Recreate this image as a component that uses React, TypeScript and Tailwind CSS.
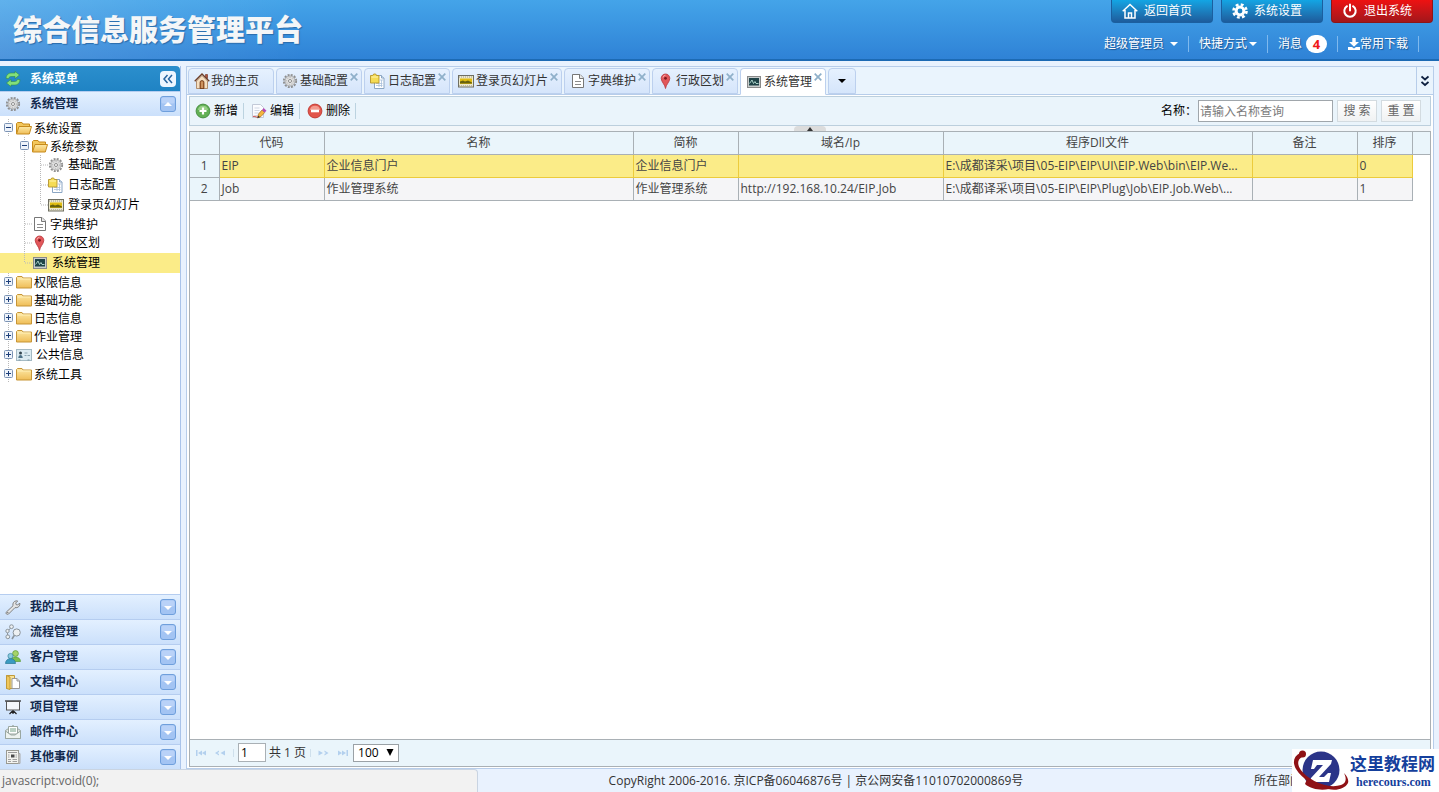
import type { ReactNode } from "react";

type IconName =
  | "home"
  | "gear"
  | "log"
  | "slide"
  | "doc"
  | "pin"
  | "monitor"
  | "folder"
  | "folderOpen"
  | "card"
  | "wrench"
  | "flow"
  | "users"
  | "archive"
  | "board"
  | "mail"
  | "news"
  | "refresh"
  | "add"
  | "edit"
  | "remove";

const ICONS: Record<IconName, ReactNode> = {
  home: (
    <>
      <path d="M11.500 1.500h2v4l-2-2z" fill="#b5533c" stroke="#6b2c1c" strokeWidth=".6" />
      <path d="M2.500 8 8 2.500 13.500 8v7.500h-11z" fill="#f6dfc0" stroke="#9a6a42" strokeWidth=".7" />
      <path d="M.7 8.300 8 1l7.300 7.300" fill="none" stroke="#6e3f28" strokeWidth="1.300" />
      <path d="M6 15.500v-6a2 2 0 0 1 4 0v6z" fill="#b0642f" stroke="#633216" strokeWidth=".7" />
      <path d="M8 8.500v6.500" stroke="#f6d9a8" strokeWidth=".8" />
    </>
  ),
  gear: (
    <>
      <circle cx="8" cy="8" r="6.200" fill="none" stroke="#8e8e8e" strokeWidth="1.800" strokeDasharray="2 1.246" />
      <circle cx="8" cy="8" r="5" fill="#e3e3e3" stroke="#9a9a9a" strokeWidth=".8" />
      <circle cx="8" cy="8" r="3.400" fill="none" stroke="#b5b5b5" strokeWidth="1" strokeDasharray="1.500 1" />
      <circle cx="8" cy="8" r="1.500" fill="#fff" stroke="#808080" strokeWidth=".9" />
    </>
  ),
  log: (
    <>
      <path d="M4.500 2.500h7l2.500 2.500v10.500H4.500z" fill="#fff" stroke="#8ba6c4" />
      <path d="M11.500 2.500V5H14" fill="#dbe8f6" stroke="#8ba6c4" />
      <path d="M6 10.500h6.500M6 12.500h6.500M10 7h3M9 10v4M11.500 7v7" stroke="#a9c0dc" strokeWidth=".8" />
      <path d="M.5 2.500h2.300l.9-1.500h2l.8 1.500H9v7.500H.5z" fill="#f5dc55" stroke="#b6952c" strokeWidth=".9" />
      <path d="M1.500 4h6.500" stroke="#fff3ac" />
    </>
  ),
  slide: (
    <>
      <rect x=".5" y="2.500" width="15" height="11.500" fill="#eee9c9" stroke="#6f6f62" />
      <path d="M1 4h14" stroke="#999" strokeDasharray="1 1" />
      <path d="M1 12.700h14" stroke="#aaa" strokeDasharray="1 1" />
      <rect x="2" y="5.500" width="12" height="5.500" fill="#e1bd12" />
      <path d="M2 10.500V8.500l3-1 2 1 3-1 4 2v1z" fill="#66610f" />
    </>
  ),
  doc: (
    <>
      <path d="M2.500 1.500h7.500l3.500 3.500v9.500h-11z" fill="#fff" stroke="#777" strokeLinejoin="round" />
      <path d="M9.500 1.500v4h4" fill="#e9e9e9" stroke="#777" />
      <path d="M5 8.500h6M5 11.500h6" stroke="#8b8b8b" />
    </>
  ),
  pin: (
    <>
      <path d="M7.500 15.500c-.4-4-4.300-6.500-4.300-10.200a4.300 4.300 0 0 1 8.600 0c0 3.700-3.900 6.200-4.300 10.200z" fill="#e2575a" stroke="#b8353a" strokeWidth=".8" />
      <path d="M5 4.500a2.800 2.800 0 0 1 2.500-2.300" stroke="#f7a8a8" fill="none" />
      <circle cx="7.500" cy="5.300" r="1.400" fill="#7d1a1e" />
    </>
  ),
  monitor: (
    <>
      <rect x="1.500" y="2.500" width="13" height="11" fill="#c9cdcd" stroke="#8a8a8a" />
      <rect x="3" y="4" width="10" height="7.500" fill="#1f4347" />
      <path d="M3.500 9.500 6 6l1.500 3.500L9 7.500l1 2h2.500" fill="none" stroke="#b7dcd1" strokeWidth=".9" />
    </>
  ),
  folder: (
    <>
      <path d="M.5 14V3.500l1-1H6l1 1.500h8.500v10z" fill="url(#folderFill)" stroke="#c79536" />
      <path d="M1.500 5h13" stroke="#fff0b8" />
    </>
  ),
  folderOpen: (
    <>
      <path d="M.5 13.500v-10l1-1h4.500l1 1.500h6.500v3" fill="#f3c75c" stroke="#c68a1c" />
      <path d="M.5 14 3 6.500h12.500L13.300 14z" fill="url(#folderFill)" stroke="#c68a1c" />
    </>
  ),
  card: (
    <>
      <rect x=".5" y="2.500" width="15" height="11" fill="#dcebf2" stroke="#a5bac4" />
      <circle cx="4.500" cy="6" r="1.500" fill="#33444e" />
      <path d="M2.300 11c0-4 4.400-4 4.400 0z" fill="#4d7187" />
      <path d="M8.500 6h3M8.500 8.500h2M11.500 8.500h2.500" stroke="#8aa3b0" />
      <path d="M2.500 13h2M11.500 13h2" stroke="#7f97a4" />
    </>
  ),
  wrench: (
    <>
      <path
        d="M1.200 13.200 8 6.800c-.6-2.600.8-4.800 3.500-5l1.200.2-2 2 .4 1.600 1.600.4 2-2c.8 2.800-1.700 5.300-4.700 4.600l-6.500 6.500c-1.600.900-3.200-.7-2.300-1.900z"
        fill="#e4e4e4"
        stroke="#777"
        strokeWidth=".9"
      />
      <circle cx="2.800" cy="13.600" r=".7" fill="#666" />
    </>
  ),
  flow: (
    <g fill="#edf0f2" stroke="#8b949b">
      <path d="M3 7 6 3.500M2.500 9v3" />
      <circle cx="6.500" cy="2.700" r="1.900" />
      <circle cx="2.500" cy="7" r="1.700" />
      <circle cx="2.800" cy="12.800" r="1.900" />
      <circle cx="11.700" cy="8.500" r="3.600" />
      <path d="m9.200 11.500-2.200 3.500" strokeWidth="1.600" />
    </g>
  ),
  users: (
    <>
      <circle cx="10.500" cy="4.500" r="2.900" fill="#a6d36a" stroke="#609a33" strokeWidth=".7" />
      <path d="M5.500 12.500c0-6 10-6 10 0z" fill="#7cc04f" stroke="#5c9c38" strokeWidth=".7" />
      <circle cx="5.500" cy="7" r="2.600" fill="#8bcbe0" stroke="#38849e" strokeWidth=".7" />
      <path d="M.5 14.500c0-6.500 10-6.500 10 0z" fill="#3a9bc2" stroke="#267593" strokeWidth=".7" />
    </>
  ),
  archive: (
    <>
      <path d="M1.500 1.500h8v13h-8z" fill="#f9e296" stroke="#c09a3a" />
      <path d="M1.500 1.500 5 3v12.500l-3.500-1z" fill="#f0c75c" stroke="#c09a3a" />
      <path d="M7 4.500h5l2.500 2.500v7.500H7z" fill="#fff" stroke="#999" />
      <path d="M12 4.500V7h2.500" fill="#ddd" stroke="#999" />
    </>
  ),
  board: (
    <>
      <path d="M0 2h16" stroke="#333" strokeWidth="1.300" />
      <rect x="1.500" y="2.500" width="13" height="8.500" fill="#f4f7fb" stroke="#555" />
      <path d="M8 11v4M8 11.500 4.500 15M8 11.500l3.500 3.500" stroke="#222" strokeWidth="1.200" />
    </>
  ),
  mail: (
    <>
      <path d="m.5 6.500 7.500-5 7.500 5v8H.5z" fill="#dfe5e2" stroke="#9aa7a1" />
      <path d="M3.500 2.500h9V10h-9z" fill="#fff" stroke="#9aa7a1" />
      <path d="M5 5h6M5 7h6" stroke="#75a187" />
      <path d="m.5 7 5.500 4h4l5.500-4v7.500H.5z" fill="#edf2ef" stroke="#9aa7a1" />
    </>
  ),
  news: (
    <>
      <rect x="1.500" y="1.500" width="12" height="13" fill="#f3f3ef" stroke="#9a9a92" />
      <path d="M3 3.500h9" stroke="#999" />
      <rect x="6" y="5.500" width="3.500" height="3" fill="#4a4a4a" />
      <path d="M3 6h1.500M3 8h1.500M3 10.500h3M3 12.500h3M7.500 10.500h4.500M7.500 12.500h4.500M10.500 6H12M10.500 8H12" stroke="#a0a0a0" />
      <path d="M13.500 4.500h1.500v10h-1.500" fill="#ccc" stroke="#aaa" />
    </>
  ),
  refresh: (
    <g fill="#83e07a" stroke="#2f8a4a" strokeWidth=".6" strokeLinejoin="round">
      <path d="M1 7.300c0-3.300 2.500-5.300 5-5.300h4V.3l4.500 3.700-4.500 3.700V5.500H7C5 5.500 4 6 3.500 7.700z" />
      <path d="M15 8.700c0 3.300-2.500 5.300-5 5.300H6v1.700L1.500 12 6 8.300v2.200h3c2 0 3-.5 3.500-2.200z" />
    </g>
  ),
  add: (
    <>
      <circle cx="8" cy="8" r="6.900" fill="#62b055" stroke="#4a9145" />
      <path d="M2.800 7a5.300 5.300 0 0 1 10.400 0z" fill="#97d088" />
      <path d="M8 4.500v7M4.500 8h7" stroke="#fff" strokeWidth="2.200" />
    </>
  ),
  edit: (
    <>
      <path d="M1.500 1.500h8l3 3v10h-11z" fill="#fbfcff" stroke="#c3cad8" />
      <path d="M3.500 5h5M3.500 7.500h5M3.500 10h4M3.500 12.500h3" stroke="#cfd6e3" />
      <path d="m6.500 15 1-4 3.500-4 2.700 2.500-3.700 4z" fill="#f5b53c" stroke="#a06a24" strokeWidth=".7" />
      <path d="m11 7 2.700 2.500 1.800-1.800L12.700 5z" fill="#b64bb6" />
      <path d="M2 13.500c1.500-1 2.500 1 4.500.500" stroke="#c94a4a" fill="none" />
      <path d="m6.500 15 .7-2.500 1.800 1.800z" fill="#333" />
    </>
  ),
  remove: (
    <>
      <circle cx="8" cy="8" r="6.900" fill="#e2554b" stroke="#c43f38" />
      <path d="M2.800 7a5.300 5.300 0 0 1 10.400 0z" fill="#f29a8f" />
      <path d="M4 8h8" stroke="#fff" strokeWidth="2.600" />
    </>
  ),
};

function Icon({ name }: { name: IconName }) {
  return (
    <svg viewBox="0 0 16 16" className="size-4 shrink-0" aria-hidden="true">
      {ICONS[name]}
    </svg>
  );
}

const TABS: Array<{ label: string; icon: IconName; active?: boolean }> = [
  { label: "基础配置", icon: "gear" },
  { label: "日志配置", icon: "log" },
  { label: "登录页幻灯片", icon: "slide" },
  { label: "字典维护", icon: "doc" },
  { label: "行政区划", icon: "pin" },
  { label: "系统管理", icon: "monitor", active: true },
];

type Slot = "blank" | "line" | "join" | "end" | "minus" | "plus";

type TreeRow = { label: string; icon: IconName; slots: Slot[]; tall?: boolean; selected?: boolean };

const TREE: TreeRow[] = [
  { label: "系统设置", icon: "folderOpen", slots: ["minus"] },
  { label: "系统参数", icon: "folderOpen", slots: ["blank", "minus"] },
  { label: "基础配置", icon: "gear", slots: ["blank", "line", "join"], tall: true },
  { label: "日志配置", icon: "log", slots: ["blank", "line", "join"], tall: true },
  { label: "登录页幻灯片", icon: "slide", slots: ["blank", "line", "end"], tall: true },
  { label: "字典维护", icon: "doc", slots: ["blank", "join"] },
  { label: "行政区划", icon: "pin", slots: ["blank", "join"], tall: true },
  { label: "系统管理", icon: "monitor", slots: ["blank", "end"], tall: true, selected: true },
  { label: "权限信息", icon: "folder", slots: ["plus"] },
  { label: "基础功能", icon: "folder", slots: ["plus"] },
  { label: "日志信息", icon: "folder", slots: ["plus"] },
  { label: "作业管理", icon: "folder", slots: ["plus"] },
  { label: "公共信息", icon: "card", slots: ["plus"], tall: true },
  { label: "系统工具", icon: "folder", slots: ["plus"] },
];

const PANELS: Array<{ label: string; icon: IconName }> = [
  { label: "我的工具", icon: "wrench" },
  { label: "流程管理", icon: "flow" },
  { label: "客户管理", icon: "users" },
  { label: "文档中心", icon: "archive" },
  { label: "项目管理", icon: "board" },
  { label: "邮件中心", icon: "mail" },
  { label: "其他事例", icon: "news" },
];

const COLUMNS = [
  { title: "代码", width: "w-[105px]" },
  { title: "名称", width: "w-[309px]" },
  { title: "简称", width: "w-[105px]" },
  { title: "域名/Ip", width: "w-[205px]" },
  { title: "程序Dll文件", width: "w-[309px]" },
  { title: "备注", width: "w-[105px]" },
  { title: "排序", width: "w-[55px]" },
];

const ROWS = [
  ["EIP", "企业信息门户", "企业信息门户", "", "E:\\成都译采\\项目\\05-EIP\\EIP\\UI\\EIP.Web\\bin\\EIP.We...", "", "0"],
  [
    "Job",
    "作业管理系统",
    "作业管理系统",
    "http://192.168.10.24/EIP.Job",
    "E:\\成都译采\\项目\\05-EIP\\EIP\\Plug\\Job\\EIP.Job.Web\\...",
    "",
    "1",
  ],
];

function TreeSlot({ kind }: { kind: Slot }) {
  const box = kind === "minus" || kind === "plus";
  return (
    <svg className="h-full w-4 shrink-0" aria-hidden="true">
      {kind !== "blank" && (
        <line x1="8.5" y1="0" x2="8.5" y2={kind === "end" ? "50%" : "100%"} stroke="#b9b9b9" strokeDasharray="1 1" />
      )}
      {(kind === "join" || kind === "end") && (
        <line x1="9" y1="50%" x2="16" y2="50%" stroke="#b9b9b9" strokeDasharray="1 1" />
      )}
      {box && (
        <svg y="50%" overflow="visible">
          <rect x="4.5" y="-4.500" width="8" height="8" rx="1" fill="#eef3fa" stroke="#7b93b4" />
          <path d={kind === "minus" ? "M6 -.5h5" : "M6 -.5h5M8.500 -3v5"} stroke="#1d3f7a" />
        </svg>
      )}
    </svg>
  );
}

function ToggleBox({ up }: { up?: boolean }) {
  return (
    <svg viewBox="0 0 16 16" className="size-4" aria-hidden="true">
      <rect x=".5" y=".5" width="15" height="15" rx="2.500" fill="#a3c4f3" stroke="#6f9fdc" />
      <rect x="1.500" y="1.500" width="13" height="6" rx="1.500" fill="#b9d2f8" />
      <path d={up ? "M4 10h8L8 6z" : "M4 7h8l-4 4z"} fill="#fff" />
    </svg>
  );
}

function PanelHeader({ label, icon, up }: { label: string; icon: IconName; up?: boolean }) {
  return (
    <button
      type="button"
      className="flex h-[25px] w-full shrink-0 items-center border-t border-[#b5cdf0] bg-linear-to-b from-[#e3f0ff] to-[#cbe0fb] pr-1 pl-[5px] text-left font-bold text-[#12294d]"
    >
      <Icon name={icon} />
      <span className="ml-[9px] flex-1">{label}</span>
      <ToggleBox up={up} />
    </button>
  );
}

function Sidebar() {
  return (
    <aside className="flex w-[181px] shrink-0 flex-col border-r border-[#a9c3ea] bg-white">
      <div className="flex h-[25px] shrink-0 items-center rounded-tr bg-linear-to-b from-[#2b8fcd] to-[#1f83c4] pr-1 pl-[5px] font-bold text-white">
        <Icon name="refresh" />
        <h2 className="ml-[9px] flex-1">系统菜单</h2>
        <button type="button" aria-label="收起菜单" className="size-4 rounded-sm bg-[#edf6ff]">
          <svg viewBox="0 0 16 16" aria-hidden="true">
            <path d="M7.500 4 4 8l3.500 4M12 4 8.500 8l3.500 4" fill="none" stroke="#27649f" strokeWidth="1.500" />
          </svg>
        </button>
      </div>
      <PanelHeader label="系统管理" icon="gear" up />
      <ul className="flex-1 pt-[3px] text-black">
        {TREE.map((row, index) => (
          <li key={index} className={row.selected ? "bg-[#fbec88]" : ""}>
            <a href="#" className={`flex items-center ${row.tall ? "h-5" : "h-[18px]"}`}>
              {row.slots.map((kind, i) => (
                <TreeSlot key={i} kind={kind} />
              ))}
              <Icon name={row.icon} />
              <span className={row.tall ? "ml-1" : "ml-0.5 pt-px"}>{row.label}</span>
            </a>
          </li>
        ))}
      </ul>
      {PANELS.map((panel) => (
        <PanelHeader key={panel.label} {...panel} />
      ))}
    </aside>
  );
}

function Caret() {
  return (
    <svg viewBox="0 0 8 4" className="h-1 w-2" fill="currentColor" aria-hidden="true">
      <path d="M0 0h8L4 4z" />
    </svg>
  );
}

function Header() {
  const button = "flex h-[23px] w-[102px] items-center gap-1.5 rounded-b border-x border-b bg-linear-to-b pl-[10px]";
  const blue = "border-[#1b5f9f] from-[#12a5e4] to-[#1d5c9c]";
  return (
    <header className="flex h-[61px] shrink-0 justify-between border-b-2 border-[#1c6ab4] bg-linear-to-b from-[#44a4e9] to-[#2f82d6] text-white">
      <h1 className="flex items-center bg-linear-to-r from-white/15 to-transparent pl-[13px] text-[29px] font-black text-[#f4f6f8] [text-shadow:1px_1px_1px_#2b6cab]">
        综合信息服务管理平台
      </h1>
      <div className="flex flex-col items-end justify-between pr-1.5 [text-shadow:1px_1px_1px_#1d5590]">
        <div className="flex gap-2">
          <button type="button" className={`${button} ${blue}`}>
            <svg viewBox="0 0 16 16" className="size-4" fill="none" stroke="currentColor" strokeWidth="1.500" aria-hidden="true">
              <path d="M.7 8.300 8 1.500l7.300 6.800M3 7v8h10V7M6.500 15v-5h3v5" />
            </svg>
            返回首页
          </button>
          <button type="button" className={`${button} ${blue}`}>
            <svg viewBox="0 0 16 16" className="size-4" fill="none" stroke="currentColor" aria-hidden="true">
              <circle cx="8" cy="8" r="3.900" strokeWidth="3" />
              <circle cx="8" cy="8" r="6.500" strokeWidth="2.600" strokeDasharray="2.800 2.305" />
            </svg>
            系统设置
          </button>
          <button type="button" className={`${button} border-[#8c1518] from-[#ee1111] to-[#a3161a]`}>
            <svg viewBox="0 0 16 16" className="size-4" fill="none" stroke="currentColor" strokeWidth="2" strokeLinecap="round" aria-hidden="true">
              <path d="M5 3.200a5.700 5.700 0 1 0 6 0M8 1.500v6" />
            </svg>
            退出系统
          </button>
        </div>
        <nav className="flex h-[30px] items-center pr-[14px]">
          <a href="#" className="flex items-center gap-1.5 pr-2.5">
            超级管理员 <Caret />
          </a>
          <a href="#" className="flex items-center gap-0.5 border-l border-[#7fb9ee] px-2.5">
            快捷方式 <Caret />
          </a>
          <a href="#" className="flex items-center gap-1 border-l border-[#7fb9ee] px-2.5">
            消息
            <span className="flex h-[18px] w-[21px] items-center justify-center rounded-full bg-white text-[13px] font-bold text-[#f01818] [text-shadow:none]">
              4
            </span>
          </a>
          <a href="#" className="flex items-center border-x border-[#7fb9ee] px-2.5">
            <svg viewBox="0 0 12 12" className="size-3" fill="currentColor" aria-hidden="true">
              <path d="M4.300 0h3.400v4H11L6 8.800 1 4h3.300zM0 9h4l2 1.500L8 9h4v3H0z" />
            </svg>
            常用下载
          </a>
        </nav>
      </div>
    </header>
  );
}

function TabBar() {
  const idle = "border border-[#bcd0ee] bg-linear-to-b from-[#e6f1fe] to-[#d5e5fb]";
  return (
    <div className="flex h-7 shrink-0 items-stretch justify-between border-b border-[#b7cdea] bg-[#eaf4fd] pl-px">
      <div className="flex gap-0.5 pt-px">
        <button type="button" className={`flex w-[86px] items-center gap-px rounded-t-sm pl-[5px] ${idle}`}>
          <Icon name="home" />
          我的主页
        </button>
        {TABS.map((tab) => (
          <div
            key={tab.label}
            className={`flex items-center rounded-t-sm border pr-[3px] pl-[5px] ${
              tab.active ? "-mb-px border-[#bcd0ee] border-b-white bg-white" : idle
            }`}
          >
            <button type="button" className="flex items-center gap-0.5">
              <Icon name={tab.icon} />
              {tab.label}
            </button>
            <button type="button" aria-label={`关闭${tab.label}`} className="mt-1 ml-0.5 self-start text-[#8fb0c9]">
              <svg viewBox="0 0 8 8" className="size-2" aria-hidden="true">
                <path d="m.7.700 6.600 6.600M7.300.700.7 7.300" stroke="currentColor" strokeWidth="1.700" />
              </svg>
            </button>
          </div>
        ))}
        <button type="button" aria-label="更多标签" className={`flex w-7 items-center justify-center rounded-t-sm text-black ${idle}`}>
          <Caret />
        </button>
      </div>
      <button type="button" aria-label="展开" className="flex w-[17px] items-center justify-center border-l border-[#b7cdea]">
        <svg viewBox="0 0 8 12" className="h-3 w-2" fill="none" stroke="#0d1f3f" strokeWidth="1.800" aria-hidden="true">
          <path d="m.5 1.500 3.500 3 3.500-3M.5 7l3.500 3 3.500-3" />
        </svg>
      </button>
    </div>
  );
}

function Toolbar() {
  const item = "flex items-center gap-[3px] border-r border-[#bcd3e0] pr-[5px]";
  const plain = "h-[22px] w-10 border border-[#d3dbe0] bg-linear-to-b from-white to-[#f0f2f3] text-[#666]";
  return (
    <div className="flex h-[30px] shrink-0 items-center justify-between border border-[#bccfdd] bg-[#eaf4fb] pr-[9px] pl-[5px] text-black">
      <div className="flex gap-[7px]">
        <button type="button" className={item}>
          <Icon name="add" />
          新增
        </button>
        <button type="button" className={item}>
          <Icon name="edit" />
          编辑
        </button>
        <button type="button" className={item}>
          <Icon name="remove" />
          删除
        </button>
      </div>
      <form className="flex items-center">
        <label htmlFor="name" className="mr-px">
          名称：
        </label>
        <input
          id="name"
          type="text"
          placeholder="请输入名称查询"
          className="mr-1 h-[22px] w-[135px] border border-[#a0a6ab] bg-white px-px placeholder:text-[#7b7b7b]"
        />
        <button type="button" className={`mr-1 ${plain}`}>
          搜 索
        </button>
        <button type="button" className={plain}>
          重 置
        </button>
      </form>
    </div>
  );
}

function DataGrid() {
  return (
    <div className="flex-1 overflow-hidden">
      <table className="w-full table-fixed border-collapse text-[#444]">
        <thead>
          <tr className="h-[22px] bg-[#eaf5fb]">
            <th className="w-[29px] border-r border-b border-[#a9b0b5]" />
            {COLUMNS.map((column) => (
              <th key={column.title} className={`border-r border-b border-[#a9b0b5] font-normal ${column.width}`}>
                {column.title}
              </th>
            ))}
            <th className="border-b border-[#a9b0b5]" />
          </tr>
        </thead>
        <tbody>
          {ROWS.map((row, index) => (
            <tr key={row[0]} className="h-[23px]">
              <td className="border-r border-b border-[#a9b0b5] bg-[#eaf5fb] text-center">{index + 1}</td>
              {row.map((value, i) => (
                <td
                  key={i}
                  className={`border-r border-b px-0.5 whitespace-nowrap ${
                    index === 0 ? "border-[#eccb3c] bg-[#fbec88]" : "border-[#a9b0b5] bg-[#f5f5f7]"
                  }`}
                >
                  {value}
                </td>
              ))}
              <td />
            </tr>
          ))}
        </tbody>
      </table>
    </div>
  );
}

function PagerArrow({ label, d }: { label: string; d: string }) {
  return (
    <button type="button" aria-label={label} disabled>
      <svg viewBox="0 0 12 8" className="h-2 w-3" fill="#b3d0ee" aria-hidden="true">
        <path d={d} />
      </svg>
    </button>
  );
}

function Pager() {
  return (
    <div className="flex h-[27px] shrink-0 items-center border-t border-[#a9b0b5] bg-[#eaf5fb] pb-px pl-[5px] text-[#333]">
      <div className="flex gap-2 border-r border-[#cfe0ec] pr-1.5">
        <PagerArrow label="首页" d="M1 1h1.500v6H1zM3 4l4-2.500v5zM7 4l4-2.500v5z" />
        <PagerArrow label="上一页" d="M0 4l4-2.500V3L2.500 4 4 5v1.500zM5.500 4 10 1.500v5z" />
      </div>
      <input
        type="text"
        aria-label="页码"
        defaultValue="1"
        className="ml-1 h-[19px] w-7 border border-[#a9b0b5] bg-white px-0.5 text-black"
      />
      <span className="mr-1 ml-[3px]">共 1 页</span>
      <div className="mr-1 flex gap-2 border-l border-[#cfe0ec] pl-1.5">
        <PagerArrow label="下一页" d="M1.500 1.500 6 4 1.500 6.500zM7.500 1.500 11.500 4l-4 2.500V5L9 4 7.500 3z" />
        <PagerArrow label="末页" d="M9.500 1H11v6H9.500zM1 1.500 5 4 1 6.500zM5 1.500 9 4 5 6.500z" />
      </div>
      <div className="relative">
        <select
          aria-label="每页条数"
          defaultValue="100"
          className="block h-[18px] w-[46px] appearance-none border border-[#9aa1a6] bg-white pl-1 leading-4 text-black"
        >
          <option>100</option>
        </select>
        <svg viewBox="0 0 8 7" className="pointer-events-none absolute top-[5px] right-[5px] h-[7px] w-2" aria-hidden="true">
          <path d="M.5 0h7L4 7z" />
        </svg>
      </div>
    </div>
  );
}

function SiteBadge() {
  return (
    <div className="absolute right-0 bottom-0 flex h-[43px] w-[147px] items-center bg-white font-['Liberation_Serif','Noto_Sans_CJK_SC',serif] font-bold text-[#15409c]">
      <svg viewBox="0 0 58 43" className="h-[43px] w-[58px] shrink-0" aria-hidden="true">
        <circle cx="29" cy="21" r="18.500" fill="#2b3488" />
        <path d="M21 11h19l-1 4-12 13h5l4-4h3l-2 9H18l1-4 12-13h-6l-3 4h-3z" fill="#fff" />
        <path
          d="M8 4C2 7 0 13 4 20c7 11 18 17 32 20 8 2 17 0 20-6 1-3-1-7-4-10 3 6 2 10-3 12-9 3-22 0-33-8C6 20 3 12 10 8z"
          fill="#8f1216"
        />
        <circle cx="10.500" cy="5" r="3.500" fill="#8f1216" />
        <path d="M13 35c8 7 22 7 30 3-9 0-19-2-28-8z" fill="#8f1216" />
      </svg>
      <div className="flex flex-col items-start">
        <span className="text-[17px] leading-[22px]">这里教程网</span>
        <span className="ml-1.5 text-xs leading-3">herecours.com</span>
      </div>
    </div>
  );
}

export default function App() {
  return (
    <div className="relative flex h-screen flex-col overflow-hidden bg-[#e9f2fe] font-['Open_Sans','Noto_Sans_CJK_SC',sans-serif] text-xs leading-4 text-[#333]">
      <svg className="absolute size-0" aria-hidden="true">
        <linearGradient id="folderFill" x1="0" y1="0" x2="0" y2="1">
          <stop offset="0" stopColor="#fde9a6" />
          <stop offset="1" stopColor="#efbd57" />
        </linearGradient>
      </svg>
      <Header />
      <div className="flex min-h-0 flex-1 gap-[5px] pt-[5px]">
        <Sidebar />
        <main className="mr-[5px] flex min-w-0 flex-1 flex-col border border-[#b7cdea] bg-white">
          <TabBar />
          <div className="flex min-h-0 flex-1 flex-col px-0.5 pt-px pb-px">
            <Toolbar />
            <div className="flex h-[5px] shrink-0 items-end justify-center bg-[#f2f6f9]">
              <button type="button" aria-label="折叠工具栏" className="flex h-[5px] w-8 items-center justify-center rounded-t bg-[#dcdcdc]">
                <svg viewBox="0 0 6 4" className="h-1 w-1.5" aria-hidden="true">
                  <path d="M0 4h6L3 0z" fill="#333" />
                </svg>
              </button>
            </div>
            <section className="flex min-h-0 flex-1 flex-col border border-[#a9b0b5]">
              <DataGrid />
              <Pager />
            </section>
          </div>
        </main>
      </div>
      <footer className="flex h-[23px] shrink-0 items-center">
        <div className="flex h-full w-[478px] items-center rounded-tr border-t border-r border-[#c9d4e2] bg-[#f2f2f2] pl-0.5 text-[#666]">
          javascript:void(0);
        </div>
        <p className="flex-1 text-center">CopyRight 2006-2016. 京ICP备06046876号 | 京公网安备11010702000869号</p>
        <p className="w-[285px] pl-[100px]">所在部门</p>
      </footer>
      <SiteBadge />
    </div>
  );
}
